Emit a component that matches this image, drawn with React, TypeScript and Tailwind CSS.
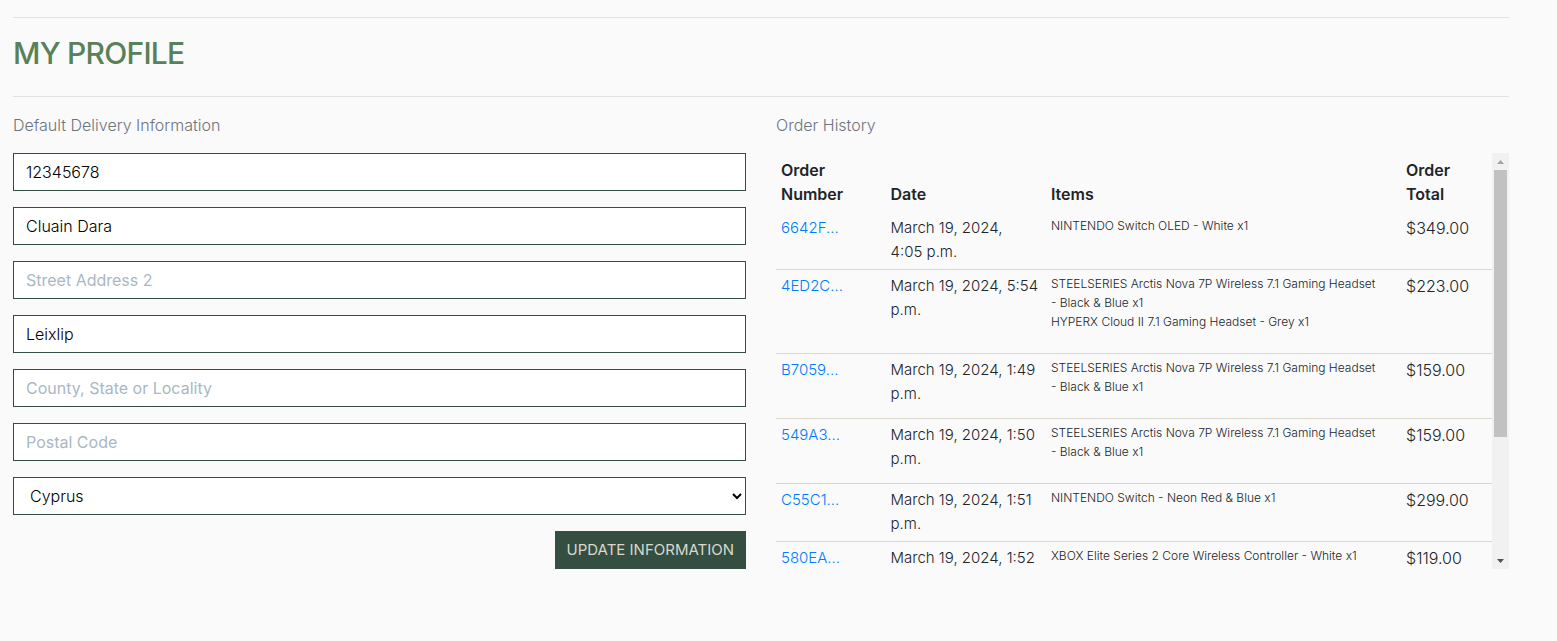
import { useRef } from "react";

type Order = {
  id: string;
  date: [string, string];
  items: string[];
  total: string;
};

const headset = "STEELSERIES Arctis Nova 7P Wireless 7.1 Gaming Headset - Black & Blue x1";

const orders: Order[] = [
  { id: "6642F...", date: ["March 19, 2024,", "4:05 p.m."], items: ["NINTENDO Switch OLED - White x1"], total: "$349.00" },
  { id: "4ED2C...", date: ["March 19, 2024, 5:54", "p.m."], items: [headset, "HYPERX Cloud II 7.1 Gaming Headset - Grey x1"], total: "$223.00" },
  { id: "B7059...", date: ["March 19, 2024, 1:49", "p.m."], items: [headset], total: "$159.00" },
  { id: "549A3...", date: ["March 19, 2024, 1:50", "p.m."], items: [headset], total: "$159.00" },
  { id: "C55C1...", date: ["March 19, 2024, 1:51", "p.m."], items: ["NINTENDO Switch - Neon Red & Blue x1"], total: "$299.00" },
  { id: "580EA...", date: ["March 19, 2024, 1:52", "p.m."], items: ["XBOX Elite Series 2 Core Wireless Controller - White x1"], total: "$119.00" },
];

const fields = [
  { name: "Phone Number", value: "12345678" },
  { name: "Street Address 1", value: "Cluain Dara" },
  { name: "Street Address 2", value: "" },
  { name: "Town or City", value: "Leixlip" },
  { name: "County, State or Locality", value: "" },
  { name: "Postal Code", value: "" },
];

function ProfileForm() {
  return (
    <form className="flex flex-col gap-4" onSubmit={(e) => e.preventDefault()}>
      {fields.map((field) => (
        <input
          key={field.name}
          type="text"
          aria-label={field.name}
          placeholder={field.name}
          defaultValue={field.value}
          className="h-[38px] w-full border border-[#344e41] bg-white px-3 font-light text-black placeholder:font-normal placeholder:text-[#aab7c4]"
        />
      ))}
      <div className="grid">
        <select
          aria-label="Country"
          defaultValue="Cyprus"
          className="col-start-1 row-start-1 h-[38px] w-full appearance-none border border-[#344e41] bg-white px-4 font-light text-black"
        >
          <option>Cyprus</option>
          <option>Ireland</option>
        </select>
        <svg
          className="pointer-events-none col-start-1 row-start-1 mr-1 self-center justify-self-end"
          width="10"
          height="8"
          viewBox="0 0 10 8"
          fill="none"
          stroke="#000"
          strokeWidth="2"
          aria-hidden="true"
        >
          <path d="M1 2l4 4 4-4" />
        </svg>
      </div>
      <button type="submit" className="h-[38px] self-end bg-[#344e41] px-3 text-[15px] text-[#dad7cd]">
        UPDATE INFORMATION
      </button>
    </form>
  );
}

function OrderHistory() {
  const pane = useRef<HTMLDivElement>(null);
  const scroll = (top: number) => pane.current?.scrollBy({ top });

  return (
    <div className="flex h-[416px]">
      <div ref={pane} className="min-w-0 flex-1 overflow-y-auto [scrollbar-width:none]">
        <table className="w-full table-fixed border-separate border-spacing-0 text-left">
          <colgroup>
            <col className="w-[15.3%]" />
            <col className="w-[22.4%]" />
            <col className="w-[49.6%]" />
            <col className="w-[12.7%]" />
          </colgroup>
          <thead>
            <tr className="align-bottom">
              <th className="p-[5px] font-semibold">Order<br />Number</th>
              <th className="p-[5px] font-semibold">Date</th>
              <th className="p-[5px] font-semibold">Items</th>
              <th className="p-[5px] font-semibold">Order<br />Total</th>
            </tr>
          </thead>
          <tbody className="font-light [&_td]:border-t [&_td]:border-[#dad7cd] [&_td]:px-[5px] [&_td]:pt-1 [&_td]:pb-[5px] [&_tr:first-child_td]:border-transparent">
            {orders.map((order) => (
              <tr key={order.id} className="align-top">
                <td className="text-[15px] leading-6">
                  <a href="#order" className="text-[#007bff]">{order.id}</a>
                </td>
                <td className="text-[15px] leading-6 whitespace-nowrap">{order.date[0]}<br />{order.date[1]}</td>
                <td>
                  <ul className="mb-[17px] pr-4 text-[12px] leading-[19px]">
                    {order.items.map((item) => (
                      <li key={item}>{item}</li>
                    ))}
                  </ul>
                </td>
                <td>{order.total}</td>
              </tr>
            ))}
          </tbody>
        </table>
      </div>
      <div className="flex w-[17px] flex-col bg-[#f1f1f1]">
        <button type="button" aria-label="Scroll up" className="flex h-[17px] items-center justify-center" onClick={() => scroll(-40)}>
          <svg width="7" height="4" viewBox="0 0 7 4" fill="#a3a3a3" aria-hidden="true"><path d="M0 4L3.5 0 7 4z" /></svg>
        </button>
        <div className="flex-1 px-0.5">
          <div className="h-[70%] bg-[#c1c1c1]" />
        </div>
        <button type="button" aria-label="Scroll down" className="flex h-[17px] items-center justify-center" onClick={() => scroll(40)}>
          <svg width="7" height="4" viewBox="0 0 7 4" fill="#505050" aria-hidden="true"><path d="M0 0L3.5 4 7 0z" /></svg>
        </button>
      </div>
    </div>
  );
}

export default function App() {
  return (
    <main className="min-h-screen bg-[#fafafa] pt-[17px] pr-12 pb-[72px] pl-[13px] font-['Inter',sans-serif] text-base leading-6 text-[#212529]">
      <header className="border-y border-[#e1e1e1] pt-4 pb-6">
        <h1 className="text-[30px] leading-[38px] font-medium tracking-tight text-[#588157]">MY PROFILE</h1>
      </header>
      <div className="grid grid-cols-2 gap-[30px] pt-4">
        <section>
          <p className="mb-4 font-light text-[#6c757d]">Default Delivery Information</p>
          <ProfileForm />
        </section>
        <section>
          <p className="mb-4 font-light text-[#6c757d]">Order History</p>
          <OrderHistory />
        </section>
      </div>
    </main>
  );
}
